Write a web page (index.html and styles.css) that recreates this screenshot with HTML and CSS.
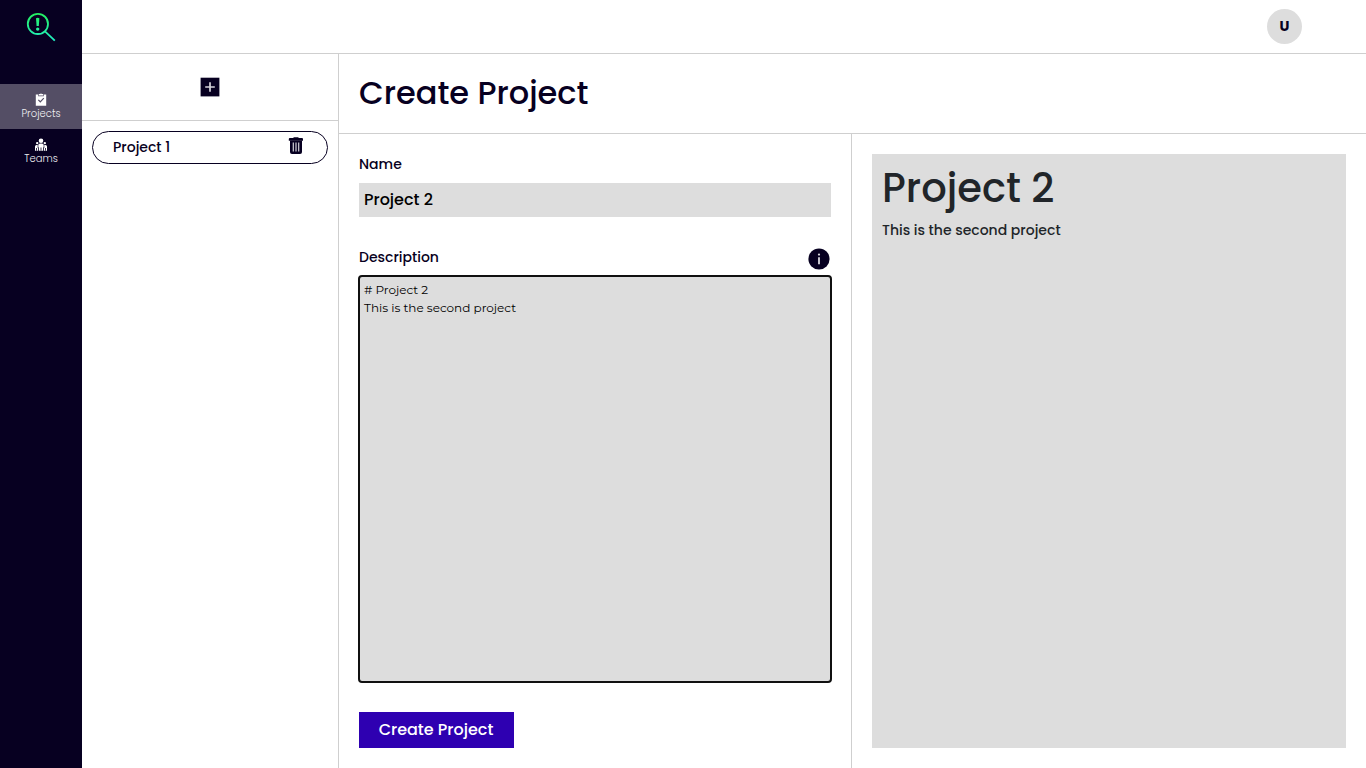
FILE: index.html
```html
<!DOCTYPE html>
<html lang="en">
<head>
<meta charset="utf-8">
<title>Create Project</title>
<link rel="stylesheet" href="styles.css">
</head>
<body>
<div class="app">
  <nav class="sidebar">
    <svg class="logo" width="30" height="30" viewBox="0 0 30 30" fill="none">
      <defs><linearGradient id="brand" gradientUnits="userSpaceOnUse" x1="0" y1="0" x2="0" y2="30"><stop offset="0" stop-color="#24f05b"/><stop offset="1" stop-color="#22f0c8"/></linearGradient></defs>
      <g stroke="url(#brand)"><circle cx="11.9" cy="11.9" r="10.1" stroke-width="1.8"/><path d="M19 19.3 28.8 28.7" stroke-width="1.8"/></g>
      <path d="M10 6.2Q11.7 5.2 13.4 6.2L12.8 14.1H10.6Z" fill="url(#brand)"/><circle cx="11.7" cy="17.1" r="1.7" fill="url(#brand)"/>
    </svg>
    <a class="nav-item active">
      <svg width="12" height="13" viewBox="0 0 12 13"><path d="M.8 1.4H3.2V3.3H8.8V1.4H11.2V12.8H.8Z" fill="#fff"/><path d="M3.8 1H5Q6 -.2 7 1H8.2V2.4H3.8Z" fill="#fff"/><path d="M3.3 6.9 5.3 8.8 8.8 5.2" fill="none" stroke="#544e65" stroke-width="1.2"/></svg>
      <span class="nav-projects">Projects</span>
    </a>
    <a class="nav-item">
      <svg width="12" height="13" viewBox="0 0 12 13" fill="#fff"><circle cx="6" cy="2.8" r="2.3"/><circle cx="2.2" cy="5.1" r="1.2"/><circle cx="9.8" cy="5.1" r="1.2"/><path d="M3.3 9.4V7Q3.3 5.5 5 5.5H7Q8.7 5.5 8.7 7V9.4H8V12.7H4V9.4ZM0 12.7V8.4Q0 6.9 1.5 6.9H2.7V10H3.2V12.7ZM8.8 12.7V10H9.3V6.9H10.5Q12 6.9 12 8.4V12.7Z"/><path d="M6 9.5V12.7M1.5 10V12.7M10.5 10V12.7" stroke="#070021" stroke-width=".8"/></svg>
      <span>Teams</span>
    </a>
  </nav>
  <div class="main">
    <header class="topbar"><div class="avatar">U</div></header>
    <div class="workspace">
      <aside class="projects">
        <div class="add-row">
          <svg width="20" height="20" viewBox="0 0 20 20"><path d="M.6.7H19.4V19.4H.6Z" fill="#070021"/><path d="M10 5.2V14.8M5.2 10H14.8" stroke="#d6d4db" stroke-width="1.7"/></svg>
        </div>
        <div class="project-card">
          <span class="card-name">Project 1</span>
          <svg width="16" height="18" viewBox="0 0 16 18"><path d="M.8 2Q.8 1.1 1.8 1.1H5L6 .2H10L11 1.1H14Q15 1.1 15 2V3.8H.8Z" fill="#070021"/><path d="M2 3.5H14V15Q14 17 12 17H4Q2 17 2 15Z" fill="#070021"/><path d="M5.3 5.5V14.6M8 5.5V14.6M10.7 5.5V14.6" stroke="#d2d0d8" stroke-width="1.2"/></svg>
        </div>
      </aside>
      <section class="content">
        <div class="heading"><h1>Create Project</h1></div>
        <div class="columns">
          <form class="editor">
            <label class="name-label" for="name">Name</label>
            <input class="name-input" id="name" value="Project 2">
            <div class="description-row">
              <label class="description-label" for="description">Description</label>
              <svg width="22" height="22" viewBox="0 0 22 22"><circle cx="11" cy="11" r="10.6" fill="#070021"/><path d="M11 9.3V16.2" stroke="#dad8df" stroke-width="1.8"/><circle cx="11" cy="6.6" r="1.1" fill="#dad8df"/></svg>
            </div>
            <textarea class="description-input" id="description" spellcheck="false"># Project 2
This is the second project</textarea>
            <button class="submit" type="button">Create Project</button>
          </form>
          <div class="preview-column">
            <article class="preview"><h2>Project 2</h2><p>This is the second project</p></article>
          </div>
        </div>
      </section>
    </div>
  </div>
</div>
</body>
</html>
```
FILE: styles.css
```css
* { box-sizing: border-box; }
body { margin: 0; background: #fff; color: #070021; font: 500 14px/21px Poppins, Inter, sans-serif; }
h1, h2, p { margin: 0; font-weight: 500; }
svg { display: block; flex: none; }
.app { display: flex; width: 100%; height: 100vh; overflow: hidden; }
.sidebar { width: 82px; flex: none; background: #070021; display: flex; flex-direction: column; }
.logo { margin: 12px 0 42px 26px; }
.nav-item { height: 45px; display: flex; flex-direction: column; align-items: center; padding-top: 9px; color: #eeedf1; font-size: 10px; font-weight: 300; line-height: 15px; }
.nav-item.active { background: #544e65; }
.nav-projects { letter-spacing: .02px; }
.main { flex: 1; min-width: 0; display: flex; flex-direction: column; }
.topbar { height: 54px; flex: none; border-bottom: 1px solid #cfcfcf; display: flex; justify-content: flex-end; align-items: center; padding-right: 64px; }
.avatar { width: 35px; height: 35px; border-radius: 50%; background: #ddd; display: grid; place-items: center; font-weight: 700; }
.workspace { flex: 1; min-height: 0; display: flex; }
.projects { width: 257px; flex: none; border-right: 1px solid #cfcfcf; }
.add-row { height: 67px; display: flex; justify-content: center; align-items: center; border-bottom: 1px solid #cfcfcf; }
.project-card { height: 33px; margin: 10px; padding: 5px 23px 0 20px; border: 1px solid #070021; border-radius: 17px; display: flex; justify-content: space-between; align-items: flex-start; }
.content { flex: 1; min-width: 0; display: flex; flex-direction: column; }
.heading { height: 80px; flex: none; padding: 15px 20px; border-bottom: 1px solid #cfcfcf; }
.heading h1 { font-size: 32px; line-height: 48px; }
.columns { flex: 1; min-height: 0; display: grid; grid-template-columns: 513px 1fr; }
.editor { display: flex; flex-direction: column; padding: 20px; border-right: 1px solid #cfcfcf; align-items: stretch; }
.name-label { height: 29px; }
.name-input { width: 100%; height: 34px; padding: 0 5px 1px; border: 0; border-radius: 0; background: #ddd; color: #000; font: 500 16px/32px Poppins, Inter, sans-serif; }
.description-row { display: flex; justify-content: space-between; height: 28px; margin-top: 31px; padding-right: 1px; }
.description-label { margin-top: -1px; }
.description-input { width: 100%; flex: 1; min-height: 0; margin: 0; padding: 5px; border: 0; border-radius: 3px; outline: 2px solid #101010; outline-offset: -1px; resize: none; background: #ddd; color: #000; font: 400 12px/18px Montserrat, Inter, sans-serif; }
.submit { width: 155px; height: 36px; margin-top: 30px; padding: 0 1px 1px 0; border: 0; background: #2e00b1; color: #fff; font: 500 16px/32px Poppins, Inter, sans-serif; white-space: nowrap; }
.preview-column { padding: 20px; }
.preview { height: 100%; padding: 10px; background: #ddd; color: #212529; }
.preview h2 { font-size: 40px; line-height: 48px; margin-bottom: 8px; }
```
